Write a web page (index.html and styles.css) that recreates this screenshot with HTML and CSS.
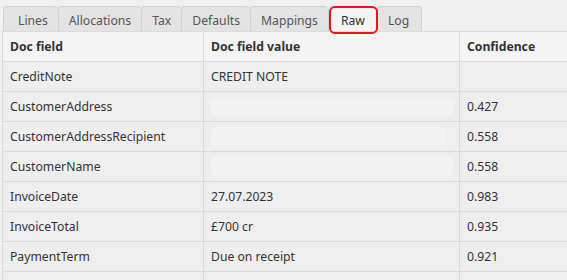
FILE: index.html
```html
<!DOCTYPE html>
<html lang="en">
<head>
  <meta charset="UTF-8" />
  <title>Raw</title>
  <link rel="stylesheet" href="styles.css">
</head>
<body>
  <div class="panel">
    <div class="tabs">
      <div class="tab first">Lines</div>
      <div class="tab">Allocations</div>
      <div class="tab">Tax</div>
      <div class="tab">Defaults</div>
      <div class="tab">Mappings</div>
      <div class="tab active">Raw</div>
      <div class="tab">Log</div>
    </div>

    <table class="grid">
      <thead>
        <tr><th class="c1">Doc field</th><th class="c2">Doc field value</th><th class="c3">Confidence</th></tr>
      </thead>
      <tbody>
        <tr><td>CreditNote</td><td>CREDIT NOTE</td><td></td></tr>
        <tr><td>CustomerAddress</td><td><div class="blur w1"></div></td><td>0.427</td></tr>
        <tr><td>CustomerAddressRecipient</td><td><div class="blur w2"></div></td><td>0.558</td></tr>
        <tr><td>CustomerName</td><td><div class="blur w1"></div></td><td>0.558</td></tr>
        <tr><td>InvoiceDate</td><td>27.07.2023</td><td>0.983</td></tr>
        <tr><td>InvoiceTotal</td><td>£700 cr</td><td>0.935</td></tr>
        <tr><td>PaymentTerm</td><td>Due on receipt</td><td>0.921</td></tr>
        <tr><td>&nbsp;</td><td></td><td></td></tr>
      </tbody>
    </table>
  </div>
</body>
</html>
```

FILE: styles.css
```css
body {
  margin: 0;
  background: #f0f0f0;
  font-family: "Noto Sans", "Open Sans", sans-serif;
  font-size: 12.2px;
  color: #333;
  overflow: hidden;
}

.panel {
  padding: 6px 0 0 2px;
}

.tabs {
  display: flex;
  height: 25px;
  padding-left: 1px;
}

.tab {
  box-sizing: border-box;
  height: 25px;
  padding: 5px 10px 0 10px;
  background: #e3e3e3;
  border: 1px solid #d2d2d2;
  border-bottom: none;
  border-right: none;
  border-radius: 4px 4px 0 0;
  color: #555;
}

.tab.first {
  padding-left: 14px;
}

.tab:last-child {
  padding-right: 12px;
  border-right: 1px solid #d2d2d2;
}

.tab.active {
  padding: 5px 12px 0 12px;
  background: #f4f4f4;
  color: #333;
  position: relative;
  z-index: 1;
}

/* red highlight drawn over the active tab */
.tab.active::after {
  content: "";
  position: absolute;
  left: 0;
  right: -1px;
  top: -1px;
  bottom: -3px;
  border: 2px solid #e8141b;
  border-radius: 6px;
}

.grid {
  border-collapse: collapse;
  width: 566px;
  table-layout: fixed;
  background: #eeeeee;
  border-left: 1px solid #dadada;
}

.grid th,
.grid td {
  height: 28px;
  padding: 0 7px 1px 7px;
  text-align: left;
  border-top: 1px solid #dcdcdc;
  border-right: 1px solid #dcdcdc;
  white-space: nowrap;
  overflow: hidden;
}

.grid th {
  background: #f4f4f4;
  font-weight: bold;
  color: #333;
}

.c1 { width: 186px; }
.c2 { width: 241px; }

.blur {
  height: 20px;
  margin-top: 1px;
  border-radius: 5px;
  background: #f2f2f2;
}

.w1 { width: 242px; }
.w2 { width: 236px; }
```
